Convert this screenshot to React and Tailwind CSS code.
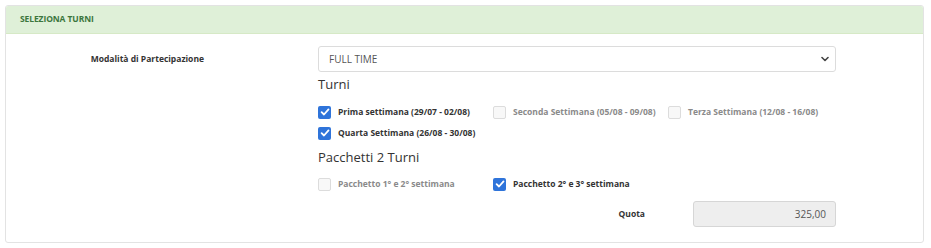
import React from 'react';

const turni = [
  { label: 'Prima settimana (29/07 - 02/08)', checked: true },
  { label: 'Seconda Settimana (05/08 - 09/08)', checked: false },
  { label: 'Terza Settimana (12/08 - 16/08)', checked: false },
  { label: 'Quarta Settimana (26/08 - 30/08)', checked: true },
];

const pacchetti = [
  { label: 'Pacchetto 1° e 2° settimana', checked: false },
  { label: 'Pacchetto 2° e 3° settimana', checked: true },
];

const Check = ({ checked, label }) => (
  <label className="flex items-center h-[20px]">
    {checked ? (
      <span className="w-[13px] h-[13px] rounded-[2px] bg-[#2f74da] flex items-center justify-center shrink-0">
        <svg width="10" height="10" viewBox="0 0 10 10" fill="none">
          <path d="M1.6 5.2 L4 7.5 L8.5 2.4" stroke="white" strokeWidth="1.8" strokeLinecap="round" strokeLinejoin="round" />
        </svg>
      </span>
    ) : (
      <span className="w-[13px] h-[13px] rounded-[2px] border border-[#dcdcdc] bg-[#f8f8f8] shrink-0" />
    )}
    <span
      className={
        'ml-[7px] text-[8.5px] font-bold whitespace-nowrap ' +
        (checked ? 'text-[#333333]' : 'text-[#8a8a8a]')
      }
    >
      {label}
    </span>
  </label>
);

export default function App() {
  return (
    <div className="bg-white w-[931px] h-[248px] pt-[5px] pl-[5px] font-['Open_Sans',sans-serif]">
      <div className="w-[919px] border border-[#e3e3e3] rounded-[3px] overflow-hidden">
        <div className="h-[28px] bg-[#dff0d8] border-b border-[#d6e9c6] flex items-center pl-[14px]">
          <span className="text-[8.5px] font-bold text-[#3c763d] tracking-[-0.1px]">SELEZIONA TURNI</span>
        </div>

        <div className="flex pt-[12px] pb-[15px]">
          <div className="w-[312px] shrink-0 flex justify-end pr-[114px]">
            <span className="h-[26px] flex items-center text-[8.5px] font-bold text-[#333333]">
              Modalità di Partecipazione
            </span>
          </div>

          <div className="w-[518px] flex flex-col">
            <div className="h-[26px] border border-[#dcdcdc] rounded-[3px] flex items-center justify-between pl-[10px] pr-[6px]">
              <span className="text-[10px] text-[#555555]">FULL TIME</span>
              <svg width="8" height="6" viewBox="0 0 8 6" fill="none">
                <path d="M1 1.5 L4 4.5 L7 1.5" stroke="#444" strokeWidth="1.6" strokeLinecap="round" strokeLinejoin="round" />
              </svg>
            </div>

            <h3 className="mt-[4px] h-[18px] flex items-center text-[13px] text-[#333333]">Turni</h3>

            <div className="mt-[8px] grid grid-cols-[175px_175px_168px] gap-y-[1px]">
              {turni.map((t) => (
                <Check key={t.label} {...t} />
              ))}
            </div>

            <h3 className="mt-[6px] h-[18px] flex items-center text-[13px] text-[#333333]">Pacchetti 2 Turni</h3>

            <div className="mt-[7px] grid grid-cols-[175px_175px_168px]">
              {pacchetti.map((p) => (
                <Check key={p.label} {...p} />
              ))}
            </div>

            <div className="mt-[7px] flex items-center justify-end">
              <span className="text-[8.5px] font-bold text-[#333333] mr-[48px]">Quota</span>
              <div className="w-[143px] h-[26px] bg-[#eeeeee] border border-[#d6d6d6] rounded-[3px] flex items-center justify-end pr-[9px]">
                <span className="text-[10px] text-[#555555]">325,00</span>
              </div>
            </div>
          </div>
        </div>
      </div>
    </div>
  );
}
